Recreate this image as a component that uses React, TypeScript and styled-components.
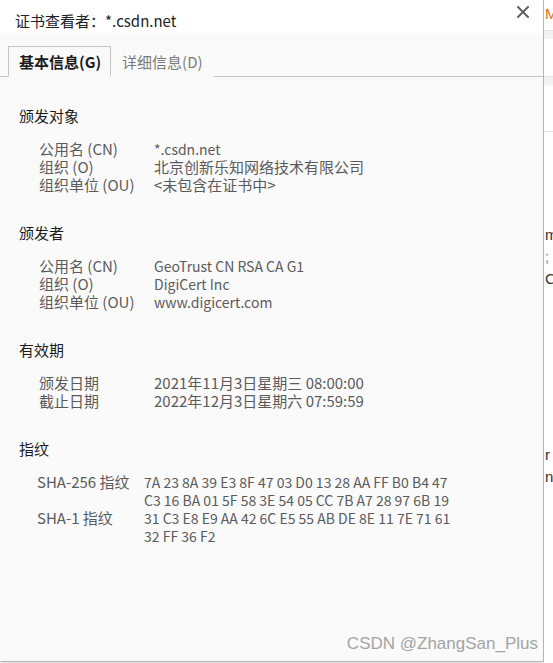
import React from "react";
import styled, { createGlobalStyle } from "styled-components";

const GlobalStyle = createGlobalStyle`
    html, body {
        margin: 0;
        padding: 0;
        background: #ffffff;
    }
    * {
        box-sizing: border-box;
    }
`

const FONT = `"Noto Sans CJK SC", "Noto Sans", sans-serif`

const Page = styled.div`
    display: flex;
    flex-direction: row;
    width: 553px;
    height: 663px;
    overflow: hidden;
    font-family: ${FONT};
`

const Dialog = styled.div`
    display: flex;
    flex-direction: column;
    width: 544px;
    height: 662px;
    flex-shrink: 0;
    background: #fafafa;
    border-right: 1px solid #b4b4b4;
    border-bottom: 1px solid #b4b4b4;
    box-shadow: 1px 1px 2px rgba(0, 0, 0, 0.15);
`

const TitleBar = styled.div`
    display: flex;
    align-items: center;
    justify-content: space-between;
    height: 33px;
    padding: 0 0 0 15px;
    background: #ffffff;
`

const TitleText = styled.div`
    font-size: 15px;
    line-height: 18px;
    color: #202124;
    padding-top: 9px;
`

const CloseButton = styled.button`
    display: flex;
    align-items: center;
    justify-content: center;
    width: 28px;
    height: 24px;
    margin-right: 6px;
    align-self: flex-start;
    padding: 0;
    border: none;
    background: transparent;
    cursor: pointer;
`

const TabBar = styled.div`
    display: flex;
    align-items: flex-end;
    height: 44px;
    padding-left: 8px;
    border-bottom: 1px solid #c4c4c4;
`

const Tab = styled.div<{ $active?: boolean }>`
    height: 31px;
    margin-bottom: -1px;
    padding: 0 ${p => (p.$active ? 9 : 10)}px 0 10px;
    display: flex;
    align-items: center;
    font-size: 15px;
    font-weight: ${p => (p.$active ? 700 : 400)};
    color: ${p => (p.$active ? "#1a1a1a" : "#7a7a7a")};
    background: #fafafa;
    border: 1px solid ${p => (p.$active ? "#c4c4c4" : "transparent")};
    border-bottom: 1px solid ${p => (p.$active ? "#fafafa" : "transparent")};
`

const Content = styled.div`
    flex: 1;
    display: flex;
    flex-direction: column;
    padding: 30px 0 0 19px;
`

const Section = styled.section`
    margin-bottom: 30px;
`

const SectionTitle = styled.div`
    font-size: 15px;
    line-height: 18px;
    color: #1a1a1a;
    margin-bottom: 15px;
`

const FieldGrid = styled.div<{ $indent: number; $labelWidth: number }>`
    display: grid;
    grid-template-columns: ${p => p.$labelWidth}px 1fr;
    padding-left: ${p => p.$indent}px;
    font-size: 15px;
    line-height: 18px;
    color: #5a5a5a;
`

const Label = styled.div``

const Value = styled.div<{ $latin?: boolean; $wrap?: boolean }>`
    font-size: ${p => (p.$latin ? "14px" : "15px")};
    max-width: ${p => (p.$wrap ? "318px" : "none")};
    white-space: ${p => (p.$wrap ? "normal" : "nowrap")};
`

const Watermark = styled.div`
    display: flex;
    justify-content: flex-end;
    padding: 0 5px 8px 0;
    font-family: "Liberation Sans", Arial, sans-serif;
    font-size: 17px;
    line-height: 18px;
    color: #a3a3a3;
`

const Backdrop = styled.div`
    flex: 1;
    display: flex;
    flex-direction: column;
    background: #ffffff;
    font-family: "Liberation Sans", Arial, sans-serif;
    font-size: 15px;
    line-height: 22px;
    color: #333;
    overflow: hidden;
`

const BackdropBand = styled.div<{ $h: number; $bg: string }>`
    height: ${p => p.$h}px;
    background: ${p => p.$bg};
    border-top: 1px solid #e4e4e4;
`

const BackdropGlyph = styled.div<{ $color?: string }>`
    padding-left: 1px;
    color: ${p => p.$color || "#333"};
    white-space: nowrap;
`

const CloseIcon = () => (
    <svg width="12" height="12" viewBox="0 0 12 12">
        <path d="M1 1 L11 11 M11 1 L1 11" stroke="#5f6368" strokeWidth="2" strokeLinecap="square" />
    </svg>
)

type Field = [string, string, boolean?]

const subject: Field[] = [
    ["公用名 (CN)", "*.csdn.net", true],
    ["组织 (O)", "北京创新乐知网络技术有限公司"],
    ["组织单位 (OU)", "<未包含在证书中>"],
]

const issuer: Field[] = [
    ["公用名 (CN)", "GeoTrust CN RSA CA G1", true],
    ["组织 (O)", "DigiCert Inc", true],
    ["组织单位 (OU)", "www.digicert.com", true],
]

const validity: Field[] = [
    ["颁发日期", "2021年11月3日星期三 08:00:00"],
    ["截止日期", "2022年12月3日星期六 07:59:59"],
]

const fingerprints: Field[] = [
    ["SHA-256 指纹", "7A 23 8A 39 E3 8F 47 03 D0 13 28 AA FF B0 B4 47 C3 16 BA 01 5F 58 3E 54 05 CC 7B A7 28 97 6B 19", true],
    ["SHA-1 指纹", "31 C3 E8 E9 AA 42 6C E5 55 AB DE 8E 11 7E 71 61 32 FF 36 F2", true],
]

function InfoSection({ title, fields, indent = 20, labelWidth = 115, wrap = false }: {
    title: string
    fields: Field[]
    indent?: number
    labelWidth?: number
    wrap?: boolean
}) {
    return (
        <Section>
            <SectionTitle>{title}</SectionTitle>
            <FieldGrid $indent={indent} $labelWidth={labelWidth}>
                {fields.map(([k, v, latin]) => (
                    <React.Fragment key={k}>
                        <Label>{k}</Label>
                        <Value $latin={latin} $wrap={wrap}>{v}</Value>
                    </React.Fragment>
                ))}
            </FieldGrid>
        </Section>
    )
}

export default function App() {
    return (
        <>
            <GlobalStyle />
            <Page>
                <Dialog>
                    <TitleBar>
                        <TitleText>证书查看者：*.csdn.net</TitleText>
                        <CloseButton aria-label="关闭"><CloseIcon /></CloseButton>
                    </TitleBar>
                    <TabBar>
                        <Tab $active>基本信息(G)</Tab>
                        <Tab>详细信息(D)</Tab>
                    </TabBar>
                    <Content>
                        <InfoSection title="颁发对象" fields={subject} />
                        <InfoSection title="颁发者" fields={issuer} />
                        <InfoSection title="有效期" fields={validity} />
                        <InfoSection title="指纹" fields={fingerprints} indent={18} labelWidth={107} wrap />
                    </Content>
                    <Watermark>CSDN @ZhangSan_Plus</Watermark>
                </Dialog>
                <Backdrop>
                    <BackdropGlyph $color="#e07020" style={{ marginTop: 3 }}>M</BackdropGlyph>
                    <BackdropBand $h={9} $bg="#f2f2f2" style={{ marginTop: 5 }} />
                    <BackdropBand $h={9} $bg="#f2f2f2" style={{ marginTop: 37 }} />
                    <BackdropBand $h={1} $bg="#e8e8e8" style={{ marginTop: 46 }} />
                    <BackdropGlyph style={{ marginTop: 92 }}>m</BackdropGlyph>
                    <BackdropGlyph $color="#888">;</BackdropGlyph>
                    <BackdropGlyph>C</BackdropGlyph>
                    <BackdropGlyph style={{ marginTop: 154 }}>r</BackdropGlyph>
                    <BackdropGlyph>n</BackdropGlyph>
                </Backdrop>
            </Page>
        </>
    )
}
